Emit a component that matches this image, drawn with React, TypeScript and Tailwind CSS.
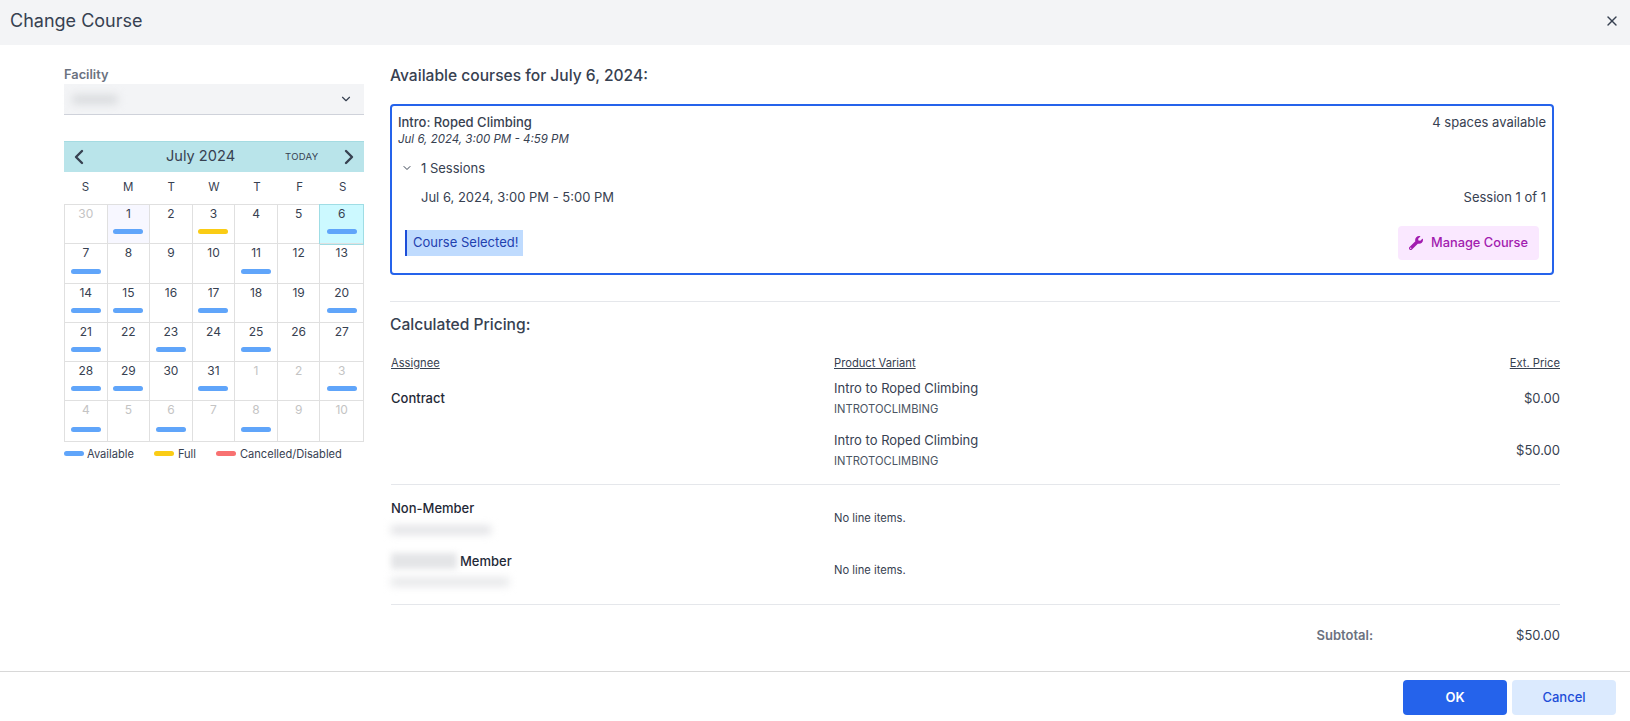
import { ChevronDown, ChevronLeft, ChevronRight, X } from 'lucide-react';
import { FaWrench } from 'react-icons/fa';

type Day = { n: number; muted?: boolean; bar?: 'blue' | 'yellow'; kind?: 'hover' | 'selected' };

const weeks: Day[][] = [
  [{ n: 30, muted: true }, { n: 1, bar: 'blue', kind: 'hover' }, { n: 2 }, { n: 3, bar: 'yellow' }, { n: 4 }, { n: 5 }, { n: 6, bar: 'blue', kind: 'selected' }],
  [{ n: 7, bar: 'blue' }, { n: 8 }, { n: 9 }, { n: 10 }, { n: 11, bar: 'blue' }, { n: 12 }, { n: 13 }],
  [{ n: 14, bar: 'blue' }, { n: 15, bar: 'blue' }, { n: 16 }, { n: 17, bar: 'blue' }, { n: 18 }, { n: 19 }, { n: 20, bar: 'blue' }],
  [{ n: 21, bar: 'blue' }, { n: 22 }, { n: 23, bar: 'blue' }, { n: 24 }, { n: 25, bar: 'blue' }, { n: 26 }, { n: 27 }],
  [{ n: 28, bar: 'blue' }, { n: 29, bar: 'blue' }, { n: 30 }, { n: 31, bar: 'blue' }, { n: 1, muted: true }, { n: 2, muted: true }, { n: 3, muted: true, bar: 'blue' }],
  [{ n: 4, muted: true, bar: 'blue' }, { n: 5, muted: true }, { n: 6, muted: true, bar: 'blue' }, { n: 7, muted: true }, { n: 8, muted: true, bar: 'blue' }, { n: 9, muted: true }, { n: 10, muted: true }],
];

function Calendar() {
  return (
    <div>
      <div className="flex h-[31px] items-center bg-[#b9e4ea] pl-[3px] text-[#374151] border-t border-[#a5dbe2]">
        <ChevronLeft size={24} strokeWidth={2.4} />
        <div className="ml-[75px] w-[83px] text-[14.6px] whitespace-nowrap">July 2024</div>
        <div className="ml-[36px] w-[47px] text-[9.5px] tracking-[0.3px]">TODAY</div>
        <ChevronRight size={24} strokeWidth={2.4} className="ml-[5px]" />
      </div>
      <div className="grid grid-cols-7 h-[32px] items-center text-center text-[11.5px] text-[#374151]">
        {['S', 'M', 'T', 'W', 'T', 'F', 'S'].map((d, i) => (
          <div key={i}>{d}</div>
        ))}
      </div>
      <div className="grid grid-cols-7 border-t border-l border-[#e0e0e0] border-r border-b">
        {weeks.flat().map((d, i) => (
          <div
            key={i}
            className={`relative h-[39.3px] border-b border-r border-[#e0e0e0] pt-[1px] text-center text-[12px] leading-[16px] ${i >= 35 ? 'border-b-0' : ''} ${i % 7 === 6 ? 'border-r-0' : ''} ${d.muted ? 'text-[#c4c4c4]' : 'text-[#374151]'} ${d.kind === 'hover' ? 'bg-[#f7f7ff]' : ''} ${d.kind === 'selected' ? 'bg-[#ccf9ff] outline outline-1 outline-[#9fdde5]' : ''}`}
          >
            {d.n}
            {d.bar && (
              <div className={`absolute left-1/2 bottom-[9px] h-[5px] w-[30px] -translate-x-1/2 rounded-full ${d.bar === 'blue' ? 'bg-[#60a5fa]' : 'bg-[#facc15]'}`} />
            )}
          </div>
        ))}
      </div>
      <div className="mt-[4px] flex items-center text-[11.1px] leading-[16px] text-[#374151]">
        <span className="h-[5px] w-[20px] rounded-full bg-[#60a5fa]" />
        <span className="ml-[3px]">Available</span>
        <span className="ml-[20px] h-[5px] w-[20px] rounded-full bg-[#facc15]" />
        <span className="ml-[4px]">Full</span>
        <span className="ml-[20px] h-[5px] w-[20px] rounded-full bg-[#f87171]" />
        <span className="ml-[4px]">Cancelled/Disabled</span>
      </div>
    </div>
  );
}

function CourseCard() {
  return (
    <div className="mt-[19px] h-[171px] w-[1164px] rounded border-2 border-[#2563eb] px-[6px] pt-[7px] text-[#374151]">
      <div className="flex justify-between text-[13px] leading-[18px]">
        <span className="font-medium">Intro: Roped Climbing</span>
        <span>4 spaces available</span>
      </div>
      <div className="text-[11.5px] italic leading-[17px]">Jul 6, 2024, 3:00 PM - 4:59 PM</div>
      <div className="mt-[11px] flex items-center text-[13px] leading-[18px]">
        <ChevronDown size={12} className="ml-[3px]" />
        <span className="ml-[8px]">1 Sessions</span>
      </div>
      <div className="mt-[11px] flex justify-between pl-[23px] text-[13px] leading-[18px]">
        <span>Jul 6, 2024, 3:00 PM - 5:00 PM</span>
        <span>Session 1 of 1</span>
      </div>
      <div className="mt-[20px] flex items-center justify-between pl-[7px] pr-[7px]">
        <div className="flex h-[26px] w-[118px] items-center border-l-2 border-[#1d4ed8] bg-[#bfdbfe] pl-[6px] text-[13px] text-[#1e40af]">Course Selected!</div>
        <button className="flex h-[34px] w-[141px] items-center justify-center gap-[8px] rounded bg-[#fae8ff] text-[12.8px] font-medium text-[#a21caf]">
          <FaWrench size={14} />
          Manage Course
        </button>
      </div>
    </div>
  );
}

function ProductLine({ price }: { price: string }) {
  return (
    <div className="flex h-[52px] items-center justify-between">
      <div>
        <div className="text-[13px] leading-[18px] text-[#374151]">Intro to Roped Climbing</div>
        <div className="mt-[5px] text-[11.2px] leading-[14px] text-[#4b5563]">INTROTOCLIMBING</div>
      </div>
      <div className="pt-[4px] text-[13px] text-[#374151]">{price}</div>
    </div>
  );
}

function Pricing() {
  return (
    <div className="pl-[1px] text-[#1f2937]">
      <div className="mt-[21px] flex text-[11.2px] leading-[14px] text-[#374151] underline">
        <div className="w-[443px]">Assignee</div>
        <div className="flex-1">Product Variant</div>
        <div>Ext. Price</div>
      </div>
      <div className="mt-[1px] flex border-b border-[#e5e7eb] pb-[9px]">
        <div className="w-[443px] pt-[18px] text-[13px] font-medium leading-[18px]">Contract</div>
        <div className="flex-1">
          <ProductLine price="$0.00" />
          <ProductLine price="$50.00" />
        </div>
      </div>
      <div className="flex h-[52px] items-start pt-[14px]">
        <div className="w-[443px]">
          <div className="text-[13px] font-medium leading-[18px]">Non-Member</div>
          <div className="mt-[9px] h-[8px] w-[100px] bg-[#dfe0e3] blur-[4px]" />
        </div>
        <div className="mt-[12px] text-[11.2px] leading-[14px] text-[#374151]">No line items.</div>
      </div>
      <div className="flex h-[68px] items-start border-b border-[#e5e7eb] pt-[15px]">
        <div className="w-[443px]">
          <div className="flex items-center text-[13px] font-medium leading-[18px]">
            <div className="mr-[3px] h-[16px] w-[66px] bg-[#e4e5e7] blur-[3px]" />
            Member
          </div>
          <div className="mt-[8px] h-[8px] w-[118px] bg-[#e4e5e7] blur-[4px]" />
        </div>
        <div className="mt-[11px] text-[11.2px] leading-[14px] text-[#374151]">No line items.</div>
      </div>
      <div className="flex justify-end pt-[21px] text-[13px] leading-[18px]">
        <div className="mr-[143px] font-semibold text-[#6b7280]">Subtotal:</div>
        <div className="text-[#374151]">$50.00</div>
      </div>
    </div>
  );
}

export default function App() {
  return (
    <div className="flex h-[721px] w-[1630px] flex-col overflow-hidden bg-white font-['Inter',sans-serif]">
      <header className="flex h-[45px] shrink-0 items-center justify-between bg-[#f3f4f6] pb-[4px] pl-[10px] pr-[10px] text-[#374151]">
        <h1 className="text-[18px]">Change Course</h1>
        <X size={16} />
      </header>
      <main className="flex h-[626px] shrink-0">
        <div className="ml-[64px] w-[300px] shrink-0 pt-[22px]">
          <label className="block text-[12.8px] font-semibold leading-[15px] text-[#6b7280]">Facility</label>
          <div className="mt-[2px] flex h-[31px] items-center justify-between border-b border-[#cfd2da] bg-[#f3f4f6] pl-[8px] pr-[11px]">
            <div className="h-[9px] w-[46px] rounded bg-[#d8dadd] blur-[4px]" />
            <ChevronDown size={14} className="text-[#374151]" />
          </div>
          <div className="mt-[26px]">
            <Calendar />
          </div>
        </div>
        <div className="ml-[26px] w-[1170px] shrink-0 pt-[22px]">
          <h2 className="text-[15.6px] font-medium leading-[18px] text-[#374151]">Available courses for July 6, 2024:</h2>
          <CourseCard />
          <div className="mt-[26px] border-t border-[#e5e7eb]" />
          <h2 className="mt-[13px] text-[15.6px] font-medium leading-[20px] text-[#374151]">Calculated Pricing:</h2>
          <Pricing />
        </div>
      </main>
      <footer className="flex h-[50px] shrink-0 justify-end gap-[5px] border-t border-[#d8d8d8] pr-[14px] pt-[8px] text-[13px] font-semibold">
        <button className="h-[35px] w-[104px] rounded bg-[#2563eb] text-white">OK</button>
        <button className="h-[35px] w-[104px] rounded bg-[#dbeafe] font-medium text-[#1d4ed8]">Cancel</button>
      </footer>
    </div>
  );
}
